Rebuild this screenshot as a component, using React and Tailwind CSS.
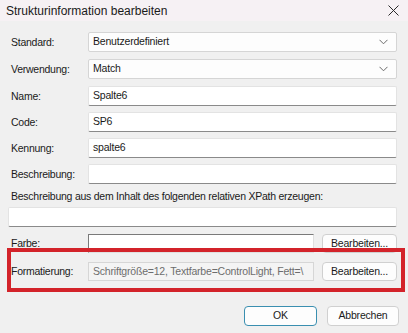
import React from "react";

const FONT = { fontFamily: '"Liberation Sans", Arial, sans-serif' };

const Label = ({ children }) => (
  <div className="w-[77px] shrink-0 text-[10.5px] tracking-[-0.25px] text-[#1a1a1a] leading-none">{children}</div>
);

const Select = ({ value }) => (
  <div className="flex-1 h-[20px] flex items-center justify-between pl-[4px] pr-[8px] bg-[#fdfdfd] border border-[#d5d5d5] rounded-[2px] text-[10.5px] tracking-[-0.2px] text-[#1a1a1a]">
    <span>{value}</span>
    <svg width="9" height="6" viewBox="0 0 9 6">
      <path d="M0.5 0.8 L4.5 4.8 L8.5 0.8" fill="none" stroke="#6b6b6b" strokeWidth="1" />
    </svg>
  </div>
);

const TextBox = ({ value }) => (
  <div className="flex-1 h-[20px] flex items-center pl-[4px] bg-white border border-[#e3e3e3] border-b-[#8a8a8a] rounded-[2px] text-[10.5px] tracking-[-0.2px] text-[#1a1a1a]">
    {value}
  </div>
);

const EditButton = () => (
  <div className="w-[75px] h-[19px] ml-[8px] shrink-0 flex items-center justify-center bg-[#fdfdfd] border border-[#d0d0d0] rounded-[4px] text-[10.5px] tracking-[-0.2px] text-[#1a1a1a]">
    Bearbeiten...
  </div>
);

export default function App() {
  return (
    <div className="relative w-[408px] h-[333px] bg-[#f0f0f0] overflow-hidden" style={FONT}>
      {/* title bar */}
      <div className="h-[21px] flex items-center justify-between pl-[6px] pr-[9px] bg-[#f6f1f4]">
        <span className="text-[12px] text-[#1a1a1a]">Strukturinformation bearbeiten</span>
        <svg width="11" height="11" viewBox="0 0 11 11">
          <path d="M0.5 0.5 L10.5 10.5 M10.5 0.5 L0.5 10.5" stroke="#2a2a2a" strokeWidth="1" />
        </svg>
      </div>

      <div className="flex flex-col pl-[11px] pr-[11px]">
        <div className="flex items-center mt-[11px]">
          <Label>Standard:</Label>
          <Select value="Benutzerdefiniert" />
        </div>
        <div className="flex items-center mt-[7px]">
          <Label>Verwendung:</Label>
          <Select value="Match" />
        </div>
        <div className="flex items-center mt-[7px]">
          <Label>Name:</Label>
          <TextBox value="Spalte6" />
        </div>
        <div className="flex items-center mt-[6px]">
          <Label>Code:</Label>
          <TextBox value="SP6" />
        </div>
        <div className="flex items-center mt-[6px]">
          <Label>Kennung:</Label>
          <TextBox value="spalte6" />
        </div>
        <div className="flex items-center mt-[6px]">
          <Label>Beschreibung:</Label>
          <TextBox value="" />
        </div>
        <div className="mt-[6px] text-[10.5px] tracking-[-0.25px] text-[#1a1a1a] leading-[13px]">
          Beschreibung aus dem Inhalt des folgenden relativen XPath erzeugen:
        </div>
        <div className="flex mt-[4px] -ml-[3px]">
          <TextBox value="" />
        </div>
        <div className="flex items-center mt-[7px]">
          <Label>Farbe:</Label>
          <div className="flex-1 h-[19px] bg-white border border-[#7a7a7a] border-r-[#e0e0e0] border-b-[#e0e0e0]" />
          <EditButton />
        </div>
        <div className="flex items-center mt-[9px]">
          <Label>Formatierung:</Label>
          <div className="flex-1 min-w-0 h-[19px] flex items-center pl-[4px] bg-[#f4f4f4] border border-[#d6d6d6] text-[10.5px] tracking-[-0.2px] text-[#6d6d6d] whitespace-nowrap overflow-hidden">
            Schriftgröße=12, Textfarbe=ControlLight, Fett=\
          </div>
          <EditButton />
        </div>
        <div className="flex justify-end mt-[25px] gap-[10px]">
          <div className="w-[73px] h-[20px] flex items-center justify-center bg-[#fdfdfd] border border-[#3a8fb0] rounded-[4px] text-[10.5px] text-[#1a1a1a]">
            OK
          </div>
          <div className="w-[72px] h-[20px] -mr-[2px] flex items-center justify-center bg-[#fdfdfd] border border-[#d0d0d0] rounded-[4px] text-[10.5px] tracking-[-0.2px] text-[#1a1a1a]">
            Abbrechen
          </div>
        </div>
      </div>

      {/* annotation highlight */}
      <div className="absolute left-[7px] top-[248px] w-[398px] h-[44px] border-[4px] border-[#d3232a]" />
    </div>
  );
}
